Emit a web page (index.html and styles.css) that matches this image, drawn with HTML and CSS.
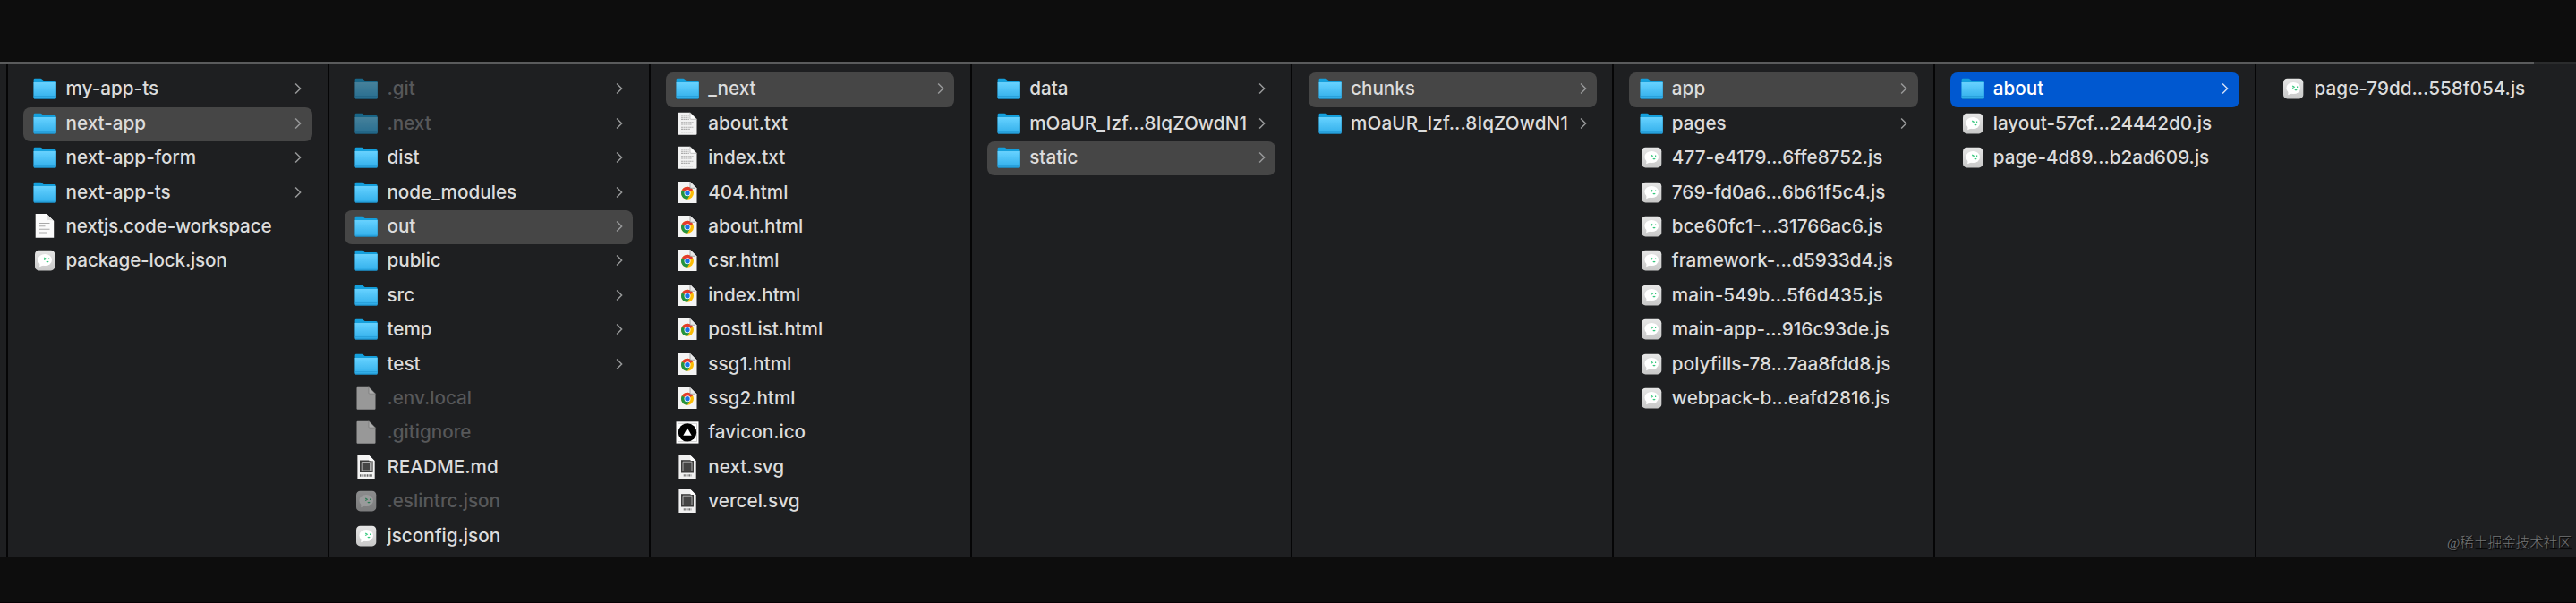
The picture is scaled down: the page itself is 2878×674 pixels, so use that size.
FILE: index.html
```html
<!DOCTYPE html>
<html lang="en">
<head>
<meta charset="utf-8">
<title>Column browser</title>
<link rel="stylesheet" href="styles.css">
</head>
<body>
<svg class="defs" width="0" height="0">
  <defs>
    <linearGradient id="front" x1="0" y1="0" x2="0" y2="1"><stop offset="0" stop-color="#65d1ff"/><stop offset="1" stop-color="#30aeea"/></linearGradient>
    <linearGradient id="tile" x1="0" y1="0" x2="0" y2="1"><stop offset="0" stop-color="#e6e6e6"/><stop offset="1" stop-color="#c8c8c8"/></linearGradient>
    <symbol id="folder" viewBox="0 0 28 28">
      <path d="M1.6 4.2q0-1.4 1.4-1.4h6.2q.9 0 1.6.6l1.2 1q.6.5 1.5.5h11.7q1.5 0 1.5 1.5V24H1.6z" fill="#149fdc"/>
      <path d="M1.6 7.6h25.1v16.6q0 1.4-1.4 1.4H3q-1.4 0-1.4-1.4z" fill="url(#front)"/>
      <path d="M1.6 7.6h25.1" stroke="#7ad8ff" stroke-width=".8"/>
      <path d="M1.6 22.7h25.1" stroke="#2197d2" stroke-width=".8"/>
      <path d="M2 25.1h24.3" stroke="#1788c2" stroke-width="1"/>
    </symbol>
    <symbol id="doc" viewBox="0 0 28 28">
      <path d="M3.7.1h12.5l8 8v18.7H3.7z" fill="#fbfbfb"/>
      <path d="M16.2.1q1.2 3-.2 7.2 4.500-.8 8.200.8z" fill="#e2e2e2"/>
      <path d="M8 10.500h11.500M8 13.700h6.500M8 17.300h11.500M8 21h8.500" stroke="#a9a9a9" stroke-width="1.100"/>
    </symbol>
    <symbol id="blank" viewBox="0 0 28 28">
      <path d="M4.500 1.700h12.500l7.500 7.500v16.500q0 1-1 1h-19q-1 0-1-1v-23q0-1 1-1z" fill="#989898"/>
      <path d="M17 1.700v6.500q0 1 1 1h6.500z" fill="#adadad" stroke="#777" stroke-width=".7"/>
    </symbol>
    <symbol id="txt" viewBox="0 0 28 28">
      <path d="M4.500 1.800h12.500l7.500 7.500v16.500q0 1-1 1h-19q-1 0-1-1v-23q0-1 1-1z" fill="#f2f2f2"/>
      <path d="M17 1.800v6.500q0 1 1 1h6.500z" fill="#fff" stroke="#9c9c9c" stroke-width=".6"/>
      <path d="M7 5h9M7 7.200h8.500M7 9.400h9M7 12.800h14M7 15h12M7 18.200h13.500M7 20.400h10M7 23.600h13" stroke="#aaa" stroke-width="1.100" stroke-dasharray="2.400 .5 1.300 .4"/>
    </symbol>
    <symbol id="chrome" viewBox="0 0 28 28">
      <path d="M3.500 1.900h13.500l7.500 7.500v16.500h-21z" fill="#f4f4f4"/>
      <circle cx="14" cy="14.800" r="7" fill="#fbbc05"/>
      <path d="M14 14.800 7.940 11.300A7 7 0 0 0 14 21.800l3-5.300z" fill="#229342"/>
      <path d="M14 14.800 7.940 11.300a7 7 0 0 1 12.120 0z" fill="#e33b2e"/>
      <circle cx="14" cy="14.800" r="3.500" fill="#fff"/>
      <circle cx="14" cy="14.800" r="2.700" fill="#1a73e8"/>
      <path d="M17 1.900v7.300l7.500.2z" fill="#e9e9e9"/>
      <path d="M17 1.900v7.400h6" fill="none" stroke="#8b8b8b" stroke-width=".7"/>
    </symbol>
    <symbol id="xml" viewBox="0 0 28 28">
      <path d="M4.400.9h13l6.300 6.300v19.700H4.400z" fill="#f0f0f0"/>
      <path d="M17.400.9v6.300h6.300z" fill="#fff"/>
      <path d="M7 6.200h14v14.300H7z" fill="#3b3b3b"/>
      <path d="M9 8.200h10v10.300H9z" fill="#444" stroke="#bbb" stroke-width=".9"/>
      <path d="M17.600 2v5h4.600z" fill="#fff"/>
      <path d="M9.800 23.300h8.500" stroke="#555" stroke-width="2.300" stroke-dasharray=".9 .7"/>
    </symbol>
    <symbol id="md" viewBox="0 0 28 28">
      <path d="M4.400.9h13l6.300 6.300v19.700H4.400z" fill="#f4f4f4"/>
      <path d="M7 6.500h14.600v13.500H7z" fill="#3b3b3b"/>
      <path d="M9.200 8.500h9.300v9.500H9.200z" fill="#444" stroke="#bbb" stroke-width=".9"/>
      <path d="M17.400.9v6.300h6.300z" fill="#fff"/>
      <path d="M20.200 7.200v12" stroke="#ddd" stroke-width=".7"/>
      <path d="M7 23.500h14" stroke="#555" stroke-width="2.300" stroke-dasharray=".9 .7"/>
    </symbol>
    <symbol id="fav" viewBox="0 0 28 28">
      <path d="M1.500 2.300h25v24.300h-25z" fill="#fff"/>
      <path d="M3.500 4.300h21v20.300h-21z" fill="none" stroke="#bbb" stroke-width=".7"/>
      <circle cx="14" cy="14.400" r="10.200" fill="#000"/>
      <path d="M14 9.600l4.700 8.200H9.300z" fill="#fff"/>
    </symbol>
    <symbol id="dev" viewBox="0 0 28 28">
      <rect x="3" y="2.700" width="22.300" height="22.700" rx="4.500" fill="url(#tile)"/>
      <ellipse cx="14.200" cy="13.500" rx="7.800" ry="6.600" fill="#fff"/>
      <path d="M8.600 17l-.4 4.200 4.500-2z" fill="#fff"/>
      <path d="M13.200 11l2 1.300-2 1.300M18.600 11.400v1.600M15.800 15.200q1.200.9 2.400 0" fill="none" stroke="#35c77d" stroke-width="1.200"/>
    </symbol>
    <symbol id="chev" viewBox="0 0 8 14"><path d="M1.100 1.500 6.600 7 1.100 12.500" fill="none" stroke="currentColor" stroke-width="1.500"/></symbol>
  </defs>
</svg>

<main class="browser">
  <div class="edge"></div>
  <ul class="column">
    <li class="row"><svg class="icon"><use href="#folder"/></svg><span class="name">my-app-ts</span><svg class="chev"><use href="#chev"/></svg></li>
    <li class="row open"><svg class="icon"><use href="#folder"/></svg><span class="name">next-app</span><svg class="chev"><use href="#chev"/></svg></li>
    <li class="row"><svg class="icon"><use href="#folder"/></svg><span class="name">next-app-form</span><svg class="chev"><use href="#chev"/></svg></li>
    <li class="row"><svg class="icon"><use href="#folder"/></svg><span class="name">next-app-ts</span><svg class="chev"><use href="#chev"/></svg></li>
    <li class="row"><svg class="icon"><use href="#doc"/></svg><span class="name tight">nextjs.code-workspace</span></li>
    <li class="row"><svg class="icon"><use href="#dev"/></svg><span class="name tight">package-lock.json</span></li>
  </ul>
  <ul class="column">
    <li class="row hidden-file"><svg class="icon"><use href="#folder"/></svg><span class="name">.git</span><svg class="chev"><use href="#chev"/></svg></li>
    <li class="row hidden-file"><svg class="icon"><use href="#folder"/></svg><span class="name">.next</span><svg class="chev"><use href="#chev"/></svg></li>
    <li class="row"><svg class="icon"><use href="#folder"/></svg><span class="name">dist</span><svg class="chev"><use href="#chev"/></svg></li>
    <li class="row"><svg class="icon"><use href="#folder"/></svg><span class="name">node_modules</span><svg class="chev"><use href="#chev"/></svg></li>
    <li class="row open"><svg class="icon"><use href="#folder"/></svg><span class="name">out</span><svg class="chev"><use href="#chev"/></svg></li>
    <li class="row"><svg class="icon"><use href="#folder"/></svg><span class="name">public</span><svg class="chev"><use href="#chev"/></svg></li>
    <li class="row"><svg class="icon"><use href="#folder"/></svg><span class="name">src</span><svg class="chev"><use href="#chev"/></svg></li>
    <li class="row"><svg class="icon"><use href="#folder"/></svg><span class="name">temp</span><svg class="chev"><use href="#chev"/></svg></li>
    <li class="row"><svg class="icon"><use href="#folder"/></svg><span class="name">test</span><svg class="chev"><use href="#chev"/></svg></li>
    <li class="row hidden-file"><svg class="icon solid"><use href="#blank"/></svg><span class="name">.env.local</span></li>
    <li class="row hidden-file"><svg class="icon solid"><use href="#blank"/></svg><span class="name">.gitignore</span></li>
    <li class="row"><svg class="icon"><use href="#md"/></svg><span class="name">README.md</span></li>
    <li class="row hidden-file"><svg class="icon"><use href="#dev"/></svg><span class="name">.eslintrc.json</span></li>
    <li class="row"><svg class="icon"><use href="#dev"/></svg><span class="name">jsconfig.json</span></li>
  </ul>
  <ul class="column">
    <li class="row open"><svg class="icon"><use href="#folder"/></svg><span class="name">_next</span><svg class="chev"><use href="#chev"/></svg></li>
    <li class="row"><svg class="icon"><use href="#txt"/></svg><span class="name">about.txt</span></li>
    <li class="row"><svg class="icon"><use href="#txt"/></svg><span class="name">index.txt</span></li>
    <li class="row"><svg class="icon"><use href="#chrome"/></svg><span class="name">404.html</span></li>
    <li class="row"><svg class="icon"><use href="#chrome"/></svg><span class="name">about.html</span></li>
    <li class="row"><svg class="icon"><use href="#chrome"/></svg><span class="name">csr.html</span></li>
    <li class="row"><svg class="icon"><use href="#chrome"/></svg><span class="name">index.html</span></li>
    <li class="row"><svg class="icon"><use href="#chrome"/></svg><span class="name">postList.html</span></li>
    <li class="row"><svg class="icon"><use href="#chrome"/></svg><span class="name">ssg1.html</span></li>
    <li class="row"><svg class="icon"><use href="#chrome"/></svg><span class="name">ssg2.html</span></li>
    <li class="row"><svg class="icon"><use href="#fav"/></svg><span class="name">favicon.ico</span></li>
    <li class="row"><svg class="icon"><use href="#xml"/></svg><span class="name">next.svg</span></li>
    <li class="row"><svg class="icon"><use href="#xml"/></svg><span class="name">vercel.svg</span></li>
  </ul>
  <ul class="column">
    <li class="row"><svg class="icon"><use href="#folder"/></svg><span class="name">data</span><svg class="chev"><use href="#chev"/></svg></li>
    <li class="row"><svg class="icon"><use href="#folder"/></svg><span class="name wide">mOaUR_Izf...8IqZOwdN1</span><svg class="chev"><use href="#chev"/></svg></li>
    <li class="row open"><svg class="icon"><use href="#folder"/></svg><span class="name">static</span><svg class="chev"><use href="#chev"/></svg></li>
  </ul>
  <ul class="column">
    <li class="row open"><svg class="icon"><use href="#folder"/></svg><span class="name">chunks</span><svg class="chev"><use href="#chev"/></svg></li>
    <li class="row"><svg class="icon"><use href="#folder"/></svg><span class="name wide">mOaUR_Izf...8IqZOwdN1</span><svg class="chev"><use href="#chev"/></svg></li>
  </ul>
  <ul class="column">
    <li class="row open"><svg class="icon"><use href="#folder"/></svg><span class="name">app</span><svg class="chev"><use href="#chev"/></svg></li>
    <li class="row"><svg class="icon"><use href="#folder"/></svg><span class="name">pages</span><svg class="chev"><use href="#chev"/></svg></li>
    <li class="row"><svg class="icon"><use href="#dev"/></svg><span class="name">477-e4179...6ffe8752.js</span></li>
    <li class="row"><svg class="icon"><use href="#dev"/></svg><span class="name">769-fd0a6...6b61f5c4.js</span></li>
    <li class="row"><svg class="icon"><use href="#dev"/></svg><span class="name">bce60fc1-...31766ac6.js</span></li>
    <li class="row"><svg class="icon"><use href="#dev"/></svg><span class="name">framework-...d5933d4.js</span></li>
    <li class="row"><svg class="icon"><use href="#dev"/></svg><span class="name">main-549b...5f6d435.js</span></li>
    <li class="row"><svg class="icon"><use href="#dev"/></svg><span class="name">main-app-...916c93de.js</span></li>
    <li class="row"><svg class="icon"><use href="#dev"/></svg><span class="name">polyfills-78...7aa8fdd8.js</span></li>
    <li class="row"><svg class="icon"><use href="#dev"/></svg><span class="name">webpack-b...eafd2816.js</span></li>
  </ul>
  <ul class="column">
    <li class="row active"><svg class="icon"><use href="#folder"/></svg><span class="name">about</span><svg class="chev"><use href="#chev"/></svg></li>
    <li class="row"><svg class="icon"><use href="#dev"/></svg><span class="name">layout-57cf...24442d0.js</span></li>
    <li class="row"><svg class="icon"><use href="#dev"/></svg><span class="name">page-4d89...b2ad609.js</span></li>
  </ul>
  <ul class="column last">
    <li class="row"><svg class="icon"><use href="#dev"/></svg><span class="name">page-79dd...558f054.js</span></li>
  </ul>
  <div class="watermark" lang="zh-CN">@稀土掘金技术社区</div>
</main>
</body>
</html>
```
FILE: styles.css
```css
* { box-sizing: border-box; }
html { height: 674px; overflow: hidden; background: #0d0d0d; }
body {
  margin: 0;
  height: 674px;
  padding-top: 69px;
  overflow: hidden;
  background: #0d0d0d;
  border-bottom: 1px solid #050003;
  font-family: Inter, "Liberation Sans", sans-serif;
}
.defs { display: block; }
.browser {
  position: relative;
  display: flex;
  height: 554px;
  overflow: hidden;
  background: #1e1f21;
}
.browser::before {
  content: "";
  position: absolute;
  inset: 0 0 auto;
  height: 3px;
  background: linear-gradient(#0000 2px, #0b0b0c 2px), linear-gradient(90deg, #5a5b5c 2831px, #2b2c2d 2831px);
}
.edge { flex: none; width: 7px; }
.column {
  flex: none;
  width: 358.86px;
  margin: 0;
  padding: 12.1px 17.300px 0 17.200px;
  border-left: 2px solid #050506;
  list-style: none;
}
.column.last { flex: 1; }
.row {
  display: flex;
  align-items: center;
  height: 38.420px;
  padding: 0 11.500px 0 10.200px;
  border-radius: 8px;
  color: #dcdcdc;
}
.open { background: #464646; }
.active { background: #0058d0; color: #fff; }
.icon { flex: none; width: 28px; height: 28px; margin: -2px 9.200px 0 0; }
.name {
  flex: 1;
  margin-top: -2px;
  font-size: 20.700px;
  font-weight: 500;
  line-height: 36px;
  white-space: nowrap;
}
.name.tight { letter-spacing: -.2px; }
.name.wide { letter-spacing: .1px; }
.chev { flex: none; width: 8px; height: 14px; margin-top: -2px; color: #98999a; }
.active .chev { color: #d3e0f5; }
.hidden-file .name { color: #57585a; }
.hidden-file .icon { opacity: .55; }
.hidden-file .icon.solid { opacity: 1; }
.watermark {
  position: absolute;
  right: 5px;
  bottom: 4px;
  color: #747576;
  font: 300 15.600px/24px "Liberation Serif", "Noto Sans CJK SC", serif;
  text-shadow: 1px 1px 1px #000;
}
```
